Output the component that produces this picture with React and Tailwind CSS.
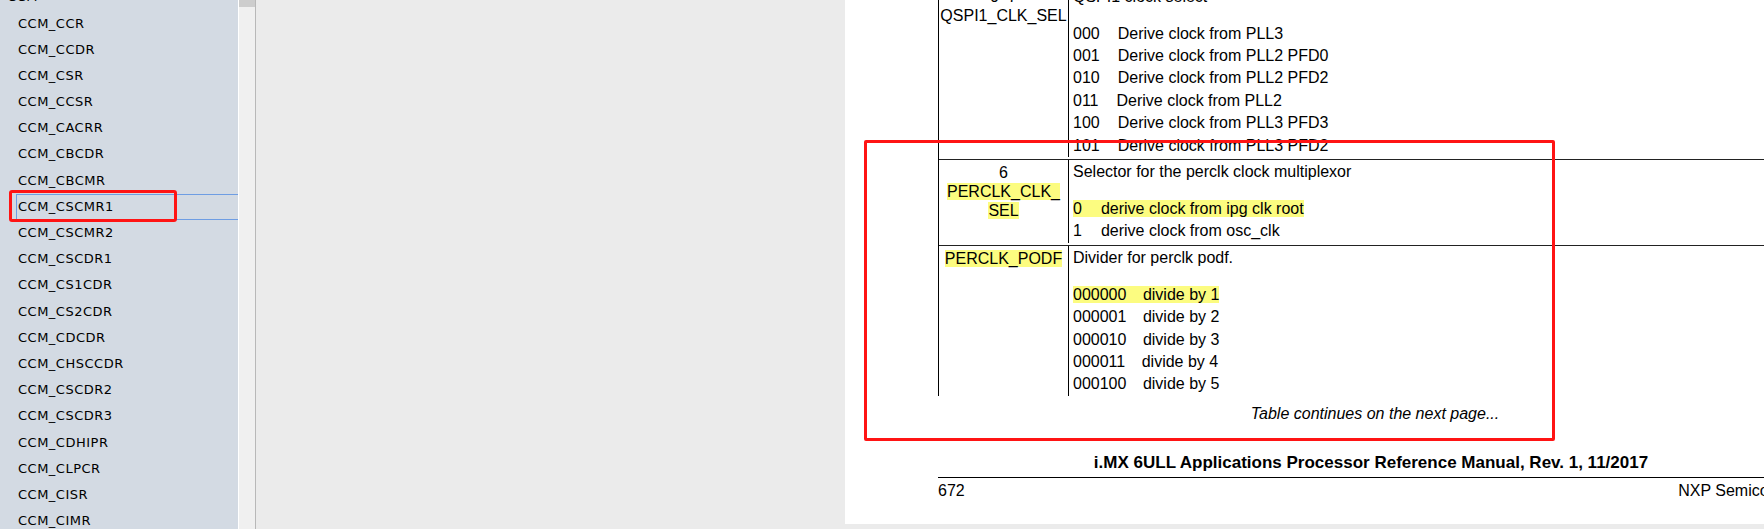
const regs = [
  'CCM_CCR', 'CCM_CCDR', 'CCM_CSR', 'CCM_CCSR', 'CCM_CACRR', 'CCM_CBCDR', 'CCM_CBCMR',
  'CCM_CSCMR1', 'CCM_CSCMR2', 'CCM_CSCDR1', 'CCM_CS1CDR', 'CCM_CS2CDR', 'CCM_CDCDR',
  'CCM_CHSCCDR', 'CCM_CSCDR2', 'CCM_CSCDR3', 'CCM_CDHIPR', 'CCM_CLPCR', 'CCM_CISR', 'CCM_CIMR',
]

const qspi = [
  ['000', 'Derive clock from PLL3'],
  ['001', 'Derive clock from PLL2 PFD0'],
  ['010', 'Derive clock from PLL2 PFD2'],
  ['011', 'Derive clock from PLL2'],
  ['100', 'Derive clock from PLL3 PFD3'],
  ['101', 'Derive clock from PLL3 PFD2'],
]

const podf = [
  ['000000', 'divide by 1'],
  ['000001', 'divide by 2'],
  ['000010', 'divide by 3'],
  ['000011', 'divide by 4'],
  ['000100', 'divide by 5'],
]

const hl = 'bg-[#fcfc80]'

function Item({ code, text, gap, mark }) {
  return (
    <div className="leading-[22.4px] whitespace-nowrap">
      <span className={mark ? hl : ''}>
        {code}
        <span className={gap}>{text}</span>
      </span>
    </div>
  )
}

function Row({ left, desc, children, pb }) {
  return (
    <div className={`flex border-t border-[#222] ${pb}`}>
      <div className="w-[130px] shrink-0 border-r border-black pt-[2.7px] text-center leading-[19px]">
        {left}
      </div>
      <div className="flex-1 pl-[4px] pt-[1px]">
        <div className="leading-[22.4px]">{desc}</div>
        <div className="mt-[14.6px]">{children}</div>
      </div>
    </div>
  )
}

export default function App() {
  return (
    <div className="relative flex h-[529px] w-[1764px] overflow-hidden bg-[#ebebeb]">
      <aside className="w-[238px] shrink-0 overflow-hidden bg-[#d3dae3] font-['DejaVu_Sans',sans-serif] text-[13px] tracking-[0.5px] text-black">
        <div className="-mt-[16px]">
          <div className="flex h-[26.2px] items-center pl-[7px]">CCM</div>
          {regs.map(r =>
            r === 'CCM_CSCMR1' ? (
              <div key={r} className="flex h-[26.2px] pl-4 pt-[0.5px]">
                <div className="flex flex-1 items-center border border-r-0 border-[#6e9de3] pl-[1px]">{r}</div>
              </div>
            ) : (
              <div key={r} className="flex h-[26.2px] items-center pl-[18px]">{r}</div>
            )
          )}
        </div>
      </aside>
      <div className="w-px shrink-0 bg-white" />
      <div className="w-[16px] shrink-0 bg-[#f0f0f0]">
        <div className="h-[7px] bg-[#cdcdcd]" />
      </div>
      <div className="w-px shrink-0 bg-[#b8b8b8]" />

      <main className="flex-1 overflow-hidden pl-[589px]">
        <div className="h-[524px] w-[1000px] overflow-hidden bg-white pl-[93px] font-['Liberation_Sans',Arial,sans-serif] text-[16px] text-black">
          <div className="-mt-[16.4px] w-[874px] border-l border-black">
            <Row
              pb="pb-[2px]"
              left={<>9–7<br />QSPI1_CLK_SEL</>}
              desc="QSPI1 clock select"
            >
              {qspi.map(([c, t]) => (
                <Item key={c} code={c} text={t} gap="ml-[18px]" />
              ))}
            </Row>
            <Row
              pb="pb-[2px]"
              left={<>6<br /><span className={hl}>PERCLK_CLK_</span><br /><span className={hl}>SEL</span></>}
              desc="Selector for the perclk clock multiplexor"
            >
              <Item code="0" text="derive clock from ipg clk root" gap="ml-[19px]" mark />
              <Item code="1" text="derive clock from osc_clk" gap="ml-[19px]" />
            </Row>
            <Row
              pb="pb-0"
              left={<span className={hl}>PERCLK_PODF</span>}
              desc="Divider for perclk podf."
            >
              {podf.map(([c, t], i) => (
                <Item key={c} code={c} text={t} gap="ml-[16.5px]" mark={i === 0} />
              ))}
            </Row>
          </div>

          <div className="mt-[7px] w-[874px] text-center italic leading-[22.4px]">
            Table continues on the next page...
          </div>
          <div className="mt-[26.5px] w-[874px] pr-[8px] text-center text-[17px] font-bold leading-[22px]">
            i.MX 6ULL Applications Processor Reference Manual, Rev. 1, 11/2017
          </div>
          <div className="mt-[3.5px] h-px w-[895px] bg-black" />
          <div className="mt-[1.5px] flex w-[892px] justify-between leading-[22px]">
            <span>672</span>
            <span>NXP Semiconductors</span>
          </div>
        </div>
      </main>

      <div className="absolute left-[9px] top-[190px] h-[32px] w-[168px] rounded-[3px] border-[3px] border-[#ff1414]" />
      <div className="absolute left-[864px] top-[140px] h-[301px] w-[691px] rounded-[2px] border-[3px] border-[#ff1414]" />
    </div>
  )
}
